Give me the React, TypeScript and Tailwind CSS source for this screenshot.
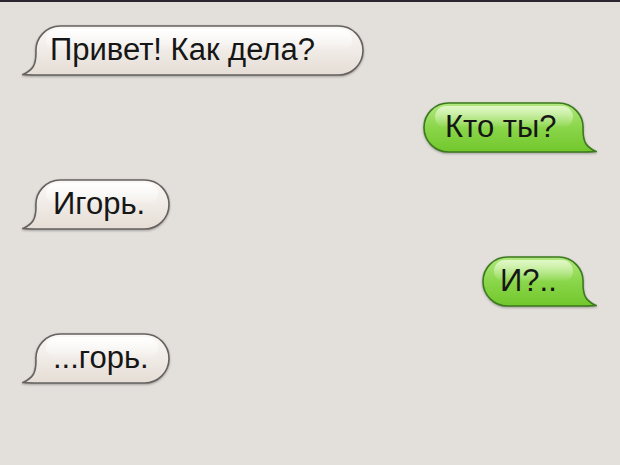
import React from 'react';

type Side = 'in' | 'out';

const H = 52;
const TAIL = 14;

// pill-shaped bubble with the tail at the lower left; outgoing ones get mirrored
function bubblePath(w: number, h: number) {
  const r = (h - 3) / 2;
  const top = 1;
  const bottom = h - 2;
  const cy = top + r;
  const left = TAIL;
  return [
    `M ${left + r} ${top}`,
    `H ${w - 1 - r}`,
    `A ${r} ${r} 0 0 1 ${w - 1 - r} ${bottom}`,
    `H ${left + 12}`,
    `C ${left + 4} ${bottom} 5 ${bottom} 1 ${bottom - 0.5}`,
    `C ${left - 3} ${bottom - 5} ${left} ${bottom - 10} ${left} ${cy + 2}`,
    `A ${r} ${r} 0 0 1 ${left + r} ${top}`,
    'Z',
  ].join(' ');
}

const palette = {
  in: {
    stops: ['#fbf9f7', '#f0ebe6', '#e5ddd5'],
    stroke: '#666260',
    gloss: '#ffffff',
  },
  out: {
    stops: ['#b2e880', '#8ad64a', '#72c72c'],
    stroke: '#3b7a1e',
    gloss: '#e4f9cc',
  },
};

function BubbleShape({ id, side, w }: { id: string; side: Side; w: number }) {
  const c = palette[side];
  const d = bubblePath(w, H);
  const flip = side === 'out' ? `translate(${w} 0) scale(-1 1)` : undefined;
  return (
    <svg
      className="absolute inset-0 drop-shadow-[0_1px_1px_rgba(0,0,0,0.3)]"
      width={w}
      height={H}
      viewBox={`0 0 ${w} ${H}`}
    >
      <defs>
        <linearGradient id={`${id}-fill`} x1="0" y1="0" x2="0" y2="1">
          <stop offset="0" stopColor={c.stops[0]} />
          <stop offset="0.5" stopColor={c.stops[1]} />
          <stop offset="1" stopColor={c.stops[2]} />
        </linearGradient>
        <linearGradient id={`${id}-gloss`} x1="0" y1="0" x2="0" y2="1">
          <stop offset="0" stopColor={c.gloss} stopOpacity="0.95" />
          <stop offset="1" stopColor={c.gloss} stopOpacity="0" />
        </linearGradient>
      </defs>
      <g transform={flip}>
        <path d={d} fill={`url(#${id}-fill)`} stroke={c.stroke} strokeWidth="1.6" />
        <rect
          x={TAIL + 10}
          y={4}
          width={w - TAIL - 22}
          height={H * 0.42}
          rx={H * 0.21}
          fill={`url(#${id}-gloss)`}
        />
      </g>
    </svg>
  );
}

function Bubble({
  id,
  side,
  w,
  className,
  text,
}: {
  id: string;
  side: Side;
  w: number;
  className: string;
  text: string;
}) {
  return (
    <div className={`relative flex items-center h-[52px] shrink-0 ${className}`}>
      <BubbleShape id={id} side={side} w={w} />
      <span className="relative -mt-[3px] text-[31px] leading-[31px] text-[#161616] whitespace-nowrap">
        {text}
      </span>
    </div>
  );
}

export default function App() {
  return (
    <div className="w-[620px] h-[465px] overflow-hidden bg-[#e3dfdb] border-t-2 border-[#2b2630] font-['Liberation_Sans',Arial,sans-serif]">
      <div className="flex flex-col gap-[25px] pt-[23px] px-[22px]">
        <div className="flex justify-start">
          <Bubble id="b1" side="in" w={342} className="w-[342px] pl-[28px]" text="Привет! Как дела?" />
        </div>
        <div className="flex justify-end pr-px">
          <Bubble id="b2" side="out" w={174} className="w-[174px] pl-[22px]" text="Кто ты?" />
        </div>
        <div className="flex justify-start">
          <Bubble id="b3" side="in" w={148} className="w-[148px] pl-[31px]" text="Игорь." />
        </div>
        <div className="flex justify-end pr-px">
          <Bubble id="b4" side="out" w={115} className="w-[115px] pl-[18px]" text="И?.." />
        </div>
        <div className="flex justify-start">
          <Bubble id="b5" side="in" w={148} className="w-[148px] pl-[31px]" text="...горь." />
        </div>
      </div>
    </div>
  );
}
